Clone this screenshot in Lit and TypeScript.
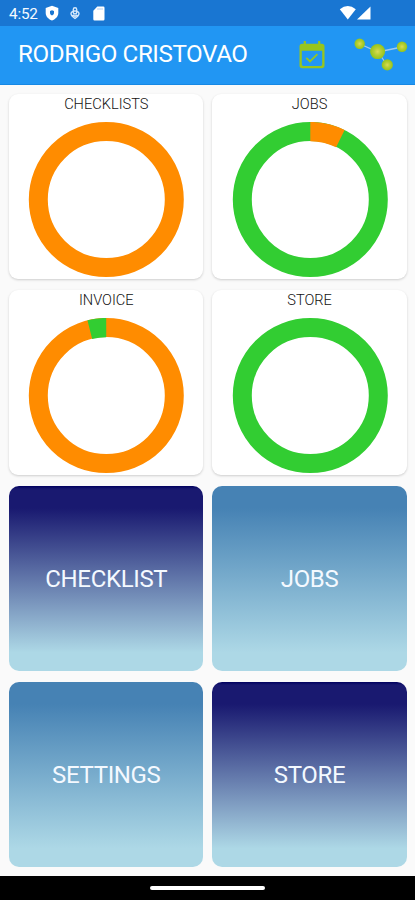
import { LitElement, html, css, svg } from "lit";
import { customElement, property } from "lit/decorators.js";

const GREEN = "#32cd32";
const ORANGE = "#ff8c00";

@customElement("donut-card")
class DonutCard extends LitElement {
  @property() label = "";
  @property() base = GREEN;
  @property() accent = ORANGE;
  // Accent slice as a percentage of the ring, and where it starts.
  @property({ type: Number }) share = 0;
  @property({ type: Number }) start = 0;

  static styles = css`
    :host { display: flex; flex-direction: column; align-items: center; background: #fff;
      border-radius: 9px; box-shadow: 0 1px 2.5px rgba(0, 0, 0, 0.18); overflow: hidden; }
    .label { font-size: 14.6px; line-height: 20px; height: 20px; font-weight: 300; color: #111; white-space: nowrap; }
    .ring { display: block; width: 156px; height: 156px; margin-top: 7.5px; flex: none; }
  `;

  render() {
    return html`
      <div class="label">${this.label}</div>
      <svg class="ring" viewBox="-0.3 0.4 156 156">
        <circle cx="78" cy="78" r="68" fill="none" stroke=${this.base} stroke-width="19"></circle>
        ${this.share
          ? svg`<circle cx="78" cy="78" r="68" fill="none" stroke=${this.accent} stroke-width="19.3"
              pathLength="100" stroke-dasharray="${this.share} ${100 - this.share}"
              transform="rotate(${-90 + this.start * 3.6} 78 78)"></circle>`
          : null}
      </svg>`;
  }
}

@customElement("menu-tile")
class MenuTile extends LitElement {
  @property() label = "";
  static styles = css`
    :host { display: flex; align-items: center; justify-content: center; border-radius: 10px;
      color: #f4f9ff; font-size: 24px; letter-spacing: -0.35px; padding-top: 2px; box-sizing: border-box;
      background: linear-gradient(#4682b4 12%, #add8e6 90%); }
    :host([dark]) { background: linear-gradient(#00005f, #191970 3px, #191970 12%, #add8e6 90%); }
  `;
  render() {
    return html`<span>${this.label}</span>`;
  }
}

@customElement("app-root")
class AppRoot extends LitElement {
  static styles = css`
    :host { display: flex; flex-direction: column; width: 415px; height: 900px; background: #fafafa;
      font-family: Roboto, sans-serif; overflow: hidden; }
    .status { height: 26px; flex: none; background: #1976d2; color: #f5faff; display: flex; align-items: center; }
    .time { font-size: 15.3px; width: 29px; margin-left: 9px; white-space: nowrap; padding-top: 2px; letter-spacing: -0.2px; }
    .status svg, .bar svg { display: block; flex: none; }
    .shield { margin-left: 7px; }
    .mic { margin-left: 11px; }
    .sd { margin-left: 13px; }
    .signal { margin-left: auto; margin-right: 44px; }
    .bar { height: 58.5px; flex: none; box-sizing: border-box; background: #2196f3; display: flex; align-items: center;
      border-bottom: 1px solid #1688e4; }
    .title { margin-left: 18px; width: 280px; color: #fff; font-size: 24.2px; letter-spacing: -0.43px; white-space: nowrap; padding-bottom: 2px; }
    .nodes { margin-left: 26.5px; padding-bottom: 2px; }
    .grid { flex: 1; display: grid; grid-template-columns: 194px 194.5px; grid-auto-rows: 184.5px;
      column-gap: 9px; row-gap: 11.5px; padding: 9.5px 0 0 9.3px; }
    .nav { height: 24.5px; flex: none; background: #000; display: flex; justify-content: center; align-items: center; }
    .pill { width: 115px; height: 4.5px; border-radius: 3px; background: #fff; }
  `;

  render() {
    return html`
      <div class="status">
        <span class="time">4:52</span>
        <svg class="shield" width="14" height="16" viewBox="0 0 14 16">
          <path fill="#fff" fill-rule="evenodd" d="M7 .7 13.300 3v5c0 3.300-2.500 6-6.300 7.600C3.200 14 .7 11.300.7 8V3zM7 5.200l-2 .8v2c0 1.200.8 2 2 2.500 1.200-.5 2-1.300 2-2.500V6z"/>
        </svg>
        <svg class="mic" width="10" height="14" viewBox="0 0 10 14" fill="none" stroke="#d5e8fb" stroke-width="1.400">
          <rect x="3.300" y="1.700" width="3.400" height="6.300" rx="1.700"/>
          <path d="M3 5.500C1.600 5.800 1 6.600 1 7.500c0 1.700 2.200 3.700 4 5 1.800-1.300 4-3.300 4-5 0-.9-.6-1.700-2-2M2.700 8.800 5 10.300l2.300-1.500M3.500 5h3"/>
        </svg>
        <svg class="sd" width="12" height="15" viewBox="0 0 12 15">
          <path fill="#fff" d="M4.300.5h6a1.200 1.200 0 0 1 1.200 1.200v11.600a1.200 1.200 0 0 1-1.200 1.200H1.500A1.200 1.200 0 0 1 .3 13.300V4.800z"/>
          <path stroke="#a9cbf0" stroke-width=".9" d="M5 2v2M7 2v2M9 2v2"/>
        </svg>
        <svg class="signal" width="32" height="16" viewBox="0 0 32 16" fill="#fff">
          <path d="M.8 4.200Q8.800-2.200 16.800 4.200L8.800 14.500z"/>
          <path d="M31.500 1.500v13H18z"/>
        </svg>
      </div>
      <div class="bar">
        <div class="title">RODRIGO CRISTOVAO</div>
        <svg width="28" height="30" viewBox="0 0 28 30">
          <path fill="#97c51d" fill-rule="evenodd" d="M5.700 1h2.200v2.800h12.200V1h2.200v2.800h1.500a2.700 2.700 0 0 1 2.700 2.700v19a2.700 2.700 0 0 1-2.700 2.700H4.200a2.700 2.700 0 0 1-2.700-2.700v-19a2.700 2.700 0 0 1 2.700-2.700h1.500zM3.800 10.800v13.500q0 1.600 1.600 1.600h17.200q1.600 0 1.600-1.600V10.800z"/>
          <path fill="none" stroke="#97c51d" stroke-width="1.800" d="m8.300 17.800 3.700 3.700 7.400-7.300"/>
        </svg>
        <svg class="nodes" width="56" height="36" viewBox="0 0 56 36">
          <defs><radialGradient id="ball"><stop offset="0" stop-color="#dbdc55"/><stop offset=".45" stop-color="#b8cf35"/><stop offset="1" stop-color="#94c41c"/></radialGradient></defs>
          <path fill="none" stroke="#a0caf0" stroke-width="1.300" d="m7 8 18 8 24-5M25 16l9 13"/>
          <g fill="url(#ball)"><circle cx="6.700" cy="7.700" r="5.200"/><circle cx="24.600" cy="15.600" r="7.500"/><circle cx="49" cy="10.700" r="5.200"/><circle cx="34.300" cy="28.900" r="5.600"/></g>
        </svg>
      </div>
      <div class="grid">
        <donut-card label="CHECKLISTS" .base=${ORANGE}></donut-card>
        <donut-card label="JOBS" .share=${7.3}></donut-card>
        <donut-card label="INVOICE" .base=${ORANGE} .accent=${GREEN} .share=${3.9} .start=${96.1}></donut-card>
        <donut-card label="STORE"></donut-card>
        <menu-tile label="CHECKLIST" dark></menu-tile>
        <menu-tile label="JOBS"></menu-tile>
        <menu-tile label="SETTINGS"></menu-tile>
        <menu-tile label="STORE" dark></menu-tile>
      </div>
      <div class="nav"><div class="pill"></div></div>
    `;
  }
}
